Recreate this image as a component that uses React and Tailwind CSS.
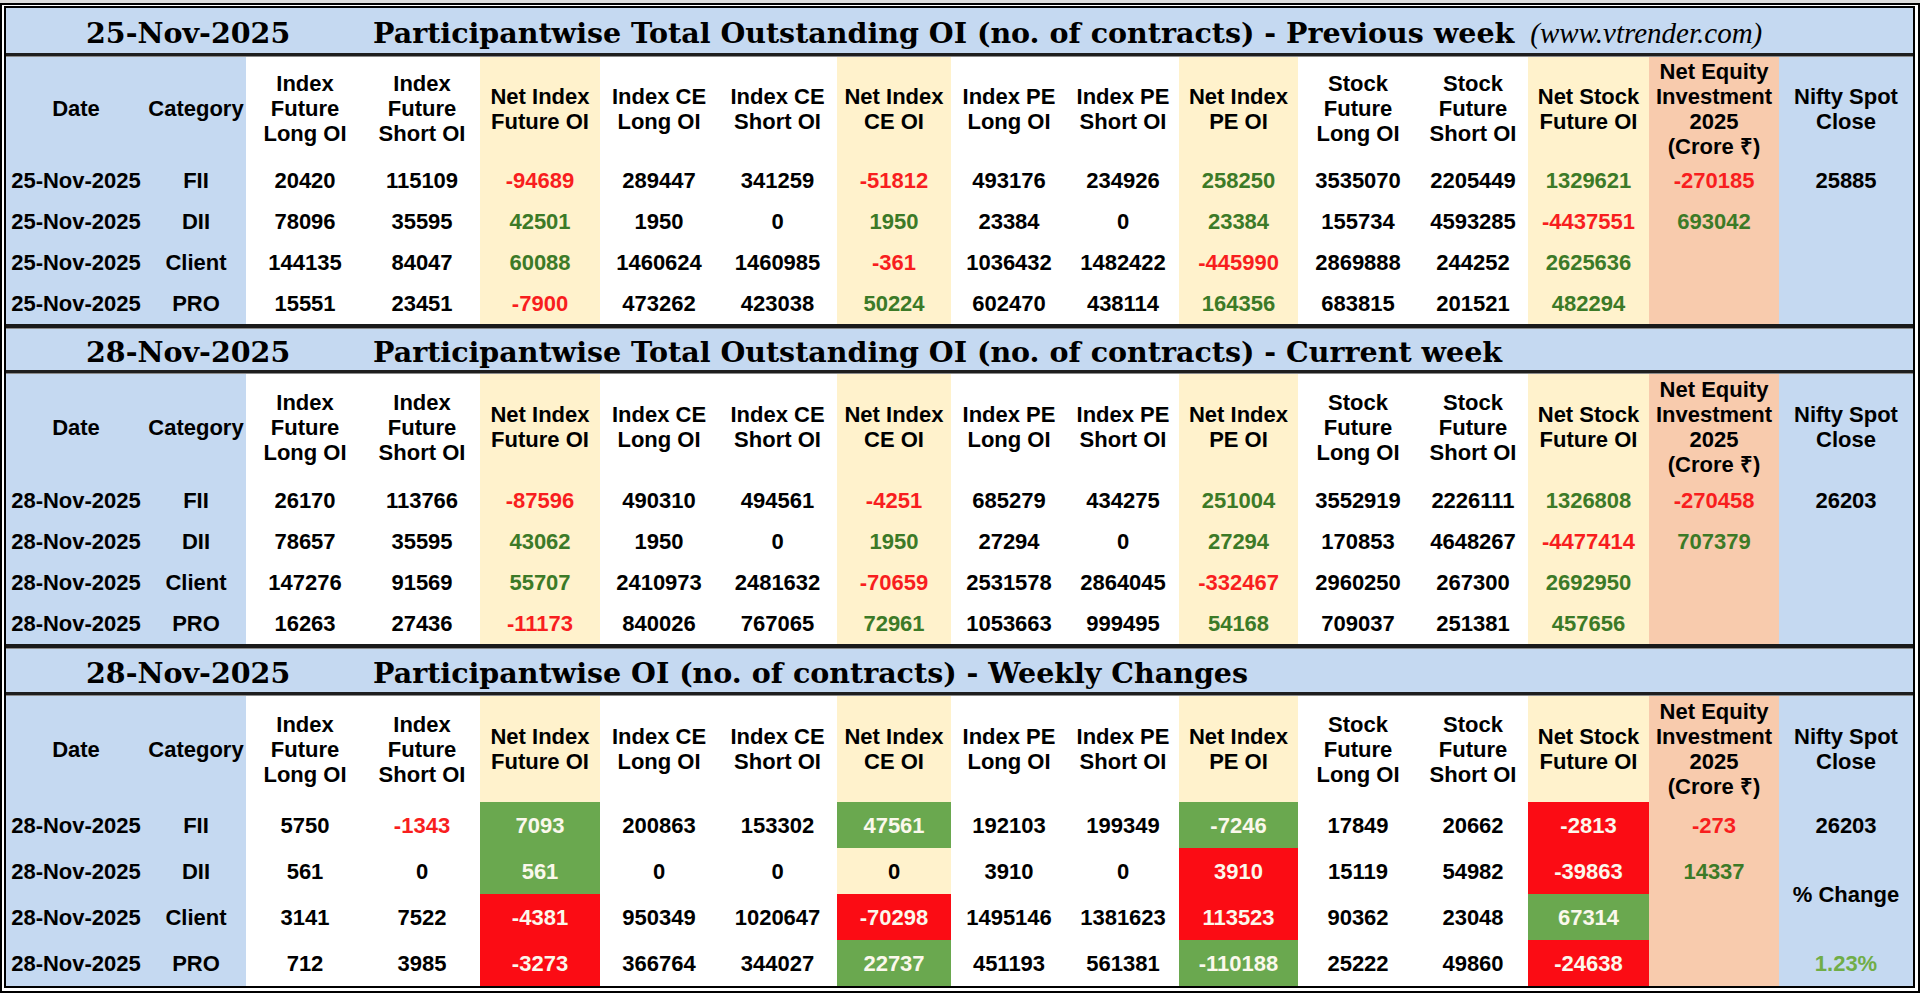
const COLBG = [
  "bg-[#c5d9f1]",
  "bg-[#c5d9f1]",
  "bg-white",
  "bg-white",
  "bg-[#fff2cc]",
  "bg-white",
  "bg-white",
  "bg-[#fff2cc]",
  "bg-white",
  "bg-white",
  "bg-[#fff2cc]",
  "bg-white",
  "bg-white",
  "bg-[#fff2cc]",
  "bg-[#f8cbad]",
  "bg-[#c5d9f1]",
];

const HEADERS = [
  "Date",
  "Category",
  "Index\nFuture\nLong OI",
  "Index\nFuture\nShort OI",
  "Net Index\nFuture OI",
  "Index CE\nLong OI",
  "Index CE\nShort OI",
  "Net Index\nCE OI",
  "Index PE\nLong OI",
  "Index PE\nShort OI",
  "Net Index\nPE OI",
  "Stock\nFuture\nLong OI",
  "Stock\nFuture\nShort OI",
  "Net Stock\nFuture OI",
  "Net Equity\nInvestment\n2025\n(Crore ₹)",
  "Nifty Spot\nClose",
];

// prefixes: r: red text, g: green text, l: light green text, R: red cell, G: green cell, S: spans two rows
const prevWeek = [
  ["25-Nov-2025", "FII", "20420", "115109", "r:-94689", "289447", "341259", "r:-51812", "493176", "234926", "g:258250", "3535070", "2205449", "g:1329621", "r:-270185", "25885"],
  ["25-Nov-2025", "DII", "78096", "35595", "g:42501", "1950", "0", "g:1950", "23384", "0", "g:23384", "155734", "4593285", "r:-4437551", "g:693042", ""],
  ["25-Nov-2025", "Client", "144135", "84047", "g:60088", "1460624", "1460985", "r:-361", "1036432", "1482422", "r:-445990", "2869888", "244252", "g:2625636", "", ""],
  ["25-Nov-2025", "PRO", "15551", "23451", "r:-7900", "473262", "423038", "g:50224", "602470", "438114", "g:164356", "683815", "201521", "g:482294", "", ""],
];

const curWeek = [
  ["28-Nov-2025", "FII", "26170", "113766", "r:-87596", "490310", "494561", "r:-4251", "685279", "434275", "g:251004", "3552919", "2226111", "g:1326808", "r:-270458", "26203"],
  ["28-Nov-2025", "DII", "78657", "35595", "g:43062", "1950", "0", "g:1950", "27294", "0", "g:27294", "170853", "4648267", "r:-4477414", "g:707379", ""],
  ["28-Nov-2025", "Client", "147276", "91569", "g:55707", "2410973", "2481632", "r:-70659", "2531578", "2864045", "r:-332467", "2960250", "267300", "g:2692950", "", ""],
  ["28-Nov-2025", "PRO", "16263", "27436", "r:-11173", "840026", "767065", "g:72961", "1053663", "999495", "g:54168", "709037", "251381", "g:457656", "", ""],
];

const changes = [
  ["28-Nov-2025", "FII", "5750", "r:-1343", "G:7093", "200863", "153302", "G:47561", "192103", "199349", "G:-7246", "17849", "20662", "R:-2813", "r:-273", "26203"],
  ["28-Nov-2025", "DII", "561", "0", "G:561", "0", "0", "0", "3910", "0", "R:3910", "15119", "54982", "R:-39863", "g:14337", "S:% Change"],
  ["28-Nov-2025", "Client", "3141", "7522", "R:-4381", "950349", "1020647", "R:-70298", "1495146", "1381623", "R:113523", "90362", "23048", "G:67314", "", null],
  ["28-Nov-2025", "PRO", "712", "3985", "R:-3273", "366764", "344027", "G:22737", "451193", "561381", "G:-110188", "25222", "49860", "R:-24638", "", "l:1.23%"],
];

function Cell({ v, col }) {
  let bg = COLBG[col];
  let color = "text-black";
  let text = v;
  let span = "";
  const p = v.slice(0, 2);
  if (p === "r:") {
    color = "text-[#f81e1e]";
    text = v.slice(2);
  } else if (p === "g:") {
    color = "text-[#3c7a27]";
    text = v.slice(2);
  } else if (p === "l:") {
    color = "text-[#70ad47]";
    text = v.slice(2);
  } else if (p === "R:") {
    bg = "bg-[#fb0c14]";
    color = "text-[#fbf8ec]";
    text = v.slice(2);
  } else if (p === "G:") {
    bg = "bg-[#6aa84f]";
    color = "text-[#fbf8ec]";
    text = v.slice(2);
  } else if (p === "S:") {
    span = "row-span-2";
    text = v.slice(2);
  }
  return (
    <div className={`${bg} ${color} ${span} flex items-center justify-center whitespace-nowrap`}>
      {text}
    </div>
  );
}

function Section({ date, title, note, titleH, headH, rowH, rows, last }) {
  return (
    <div>
      <div className={`${titleH} bg-[#c5d9f1] flex items-center pt-[6px] font-['DejaVu_Serif',serif] font-bold text-[28.5px] text-black whitespace-nowrap`}>
        <div className="w-[367px] pl-[80px]">{date}</div>
        <div>{title}</div>
        {note && (
          <div className="ml-[16px] font-['Liberation_Serif',serif] font-normal italic text-[29px]">{note}</div>
        )}
      </div>
      <div className="h-[4px] bg-[#1e1e1e] border-b border-[#8a8a8a]" />
      <div
        className={`grid grid-cols-[140px_100px_118px_116px_120px_118px_119px_114px_116px_112px_119px_120px_110px_121px_130px_134px] ${
          rowH === 46 ? "grid-rows-[106px_46px_46px_46px_46px]" : headH === 103 ? "grid-rows-[103px_41px_41px_41px_41px]" : "grid-rows-[106px_41px_41px_41px_41px]"
        } font-['Liberation_Sans',Arial,sans-serif] font-bold text-[22px]`}
      >
        {HEADERS.map((h, i) => (
          <div key={i} className={`${COLBG[i]} flex items-center justify-center text-center whitespace-pre-line leading-[25px] text-black`}>
            {h}
          </div>
        ))}
        {rows.map((r, ri) =>
          r.map((v, ci) => (v === null ? null : <Cell key={ri + "-" + ci} v={v} col={ci} />))
        )}
      </div>
      {!last && <div className="h-[5px] bg-[#1a1a1a] border-b border-[#8a8a8a]" />}
    </div>
  );
}

export default function App() {
  return (
    <div className="w-[1920px] h-[993px] bg-white overflow-hidden">
      <div className="h-[3px] bg-[#dcdcdc]" />
      <div className="border-t-[5px] border-l-[6px] border-r-[7px] border-b-[7px] border-double border-black bg-white">
        <Section
          date="25-Nov-2025"
          title="Participantwise Total Outstanding OI (no. of contracts) - Previous week"
          note="(www.vtrender.com)"
          titleH="h-[45px]"
          headH={103}
          rowH={41}
          rows={prevWeek}
        />
        <Section
          date="28-Nov-2025"
          title="Participantwise Total Outstanding OI (no. of contracts) - Current week"
          titleH="h-[41px]"
          headH={106}
          rowH={41}
          rows={curWeek}
        />
        <Section
          date="28-Nov-2025"
          title="Participantwise OI (no. of contracts) - Weekly Changes"
          titleH="h-[43px]"
          headH={106}
          rowH={46}
          rows={changes}
          last
        />
      </div>
    </div>
  );
}
